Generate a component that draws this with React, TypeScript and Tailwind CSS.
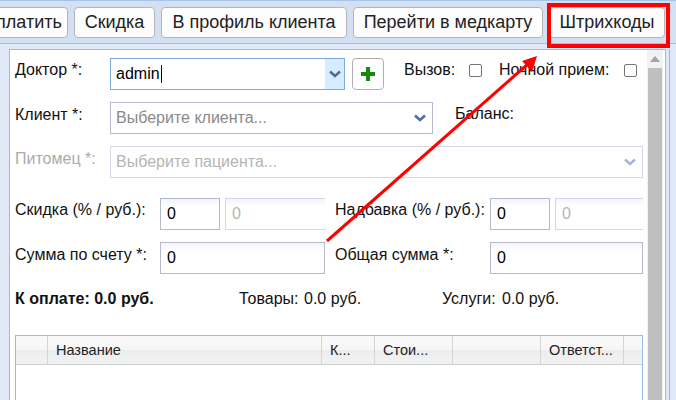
import React from "react";

const font = { fontFamily: '"Liberation Sans", Arial, sans-serif' };

function Btn({ children, className = "" }: { children: React.ReactNode; className?: string }) {
  return (
    <div className={"h-[31px] shrink-0 rounded-[4px] border border-[#b5b5b5] bg-[#fdfdfd] flex items-center justify-center text-[18px] text-[#222] whitespace-nowrap " + className}>
      {children}
    </div>
  );
}

function Chevron({ color }: { color: string }) {
  return (
    <svg width="12" height="8" viewBox="0 0 12 8">
      <path d="M1 1.5 L6 6 L11 1.5" fill="none" stroke={color} strokeWidth="2.6" />
    </svg>
  );
}

function Input({ className = "", value, disabled }: { className?: string; value: string; disabled?: boolean }) {
  return (
    <div
      className={
        "h-[32px] shrink-0 border bg-gradient-to-b from-[#f3f4f7] to-white to-[25%] pl-[6px] flex items-center text-[16px] " +
        (disabled ? "border-[#d4d6e3] text-[#b5b5b5] " : "border-[#b5b8ce] text-black ") +
        className
      }
    >
      {value}
    </div>
  );
}

function Check() {
  return <div className="h-[13px] w-[13px] shrink-0 rounded-[2px] border border-[#767676] bg-white" />;
}

const cols = [
  { w: "w-[32px]", t: "" },
  { w: "w-[274px]", t: "Название" },
  { w: "w-[53px]", t: "К..." },
  { w: "w-[78px]", t: "Стои..." },
  { w: "w-[88px]", t: "" },
  { w: "w-[83px]", t: "Ответст..." },
];

export default function App() {
  return (
    <div style={font} className="relative h-[400px] w-[676px] overflow-hidden bg-[#dfe8f6] text-[16px] text-[#111]">
      {/* toolbar */}
      <div className="h-[44px] border-t border-b border-t-[#a9c3e6] border-b-[#a3bfe4] bg-[#d2e0f1] pt-[6px] flex gap-[6px] -ml-[24px]">
        <Btn className="w-[92px]">Оплатить</Btn>
        <Btn className="w-[81px]">Скидка</Btn>
        <Btn className="w-[186px]">В профиль клиента</Btn>
        <Btn className="w-[190px]">Перейти в медкарту</Btn>
        <Btn className="w-[116px]">Штрихкоды</Btn>
      </div>

      {/* body */}
      <div className="flex h-[356px] pt-[5px] pl-[9px]">
        <div className="flex h-[400px] w-[657px] border border-[#99bbe8] bg-white">
          <div className="w-[634px] shrink-0 pl-[5px] pt-[8px]">
            {/* doctor */}
            <div className="flex h-[32px]">
              <div className="w-[95px] shrink-0">Доктор *:</div>
              <div className="h-[32px] w-[235px] shrink-0 border border-[#7eaadc] flex">
                <div className="flex-1 pl-[5px] flex items-center text-[16px] text-black">
                  admin<span className="ml-px inline-block h-[18px] w-px bg-black" />
                </div>
                <div className="w-[19px] bg-[#d6edff] flex items-center justify-center">
                  <Chevron color="#4a6fa5" />
                </div>
              </div>
              <div className="ml-[7px] h-[32px] w-[32px] shrink-0 rounded-[4px] border border-[#b0b0b0] bg-white flex items-center justify-center">
                <svg width="14" height="14" viewBox="0 0 14 14">
                  <path d="M5 0h4v5h5v4H9v5H5V9H0V5h5z" fill="#16890f" />
                </svg>
              </div>
              <div className="ml-[20px] w-[65px] shrink-0">Вызов:</div>
              <div className="pt-[6px] shrink-0"><Check /></div>
              <div className="ml-[17px] w-[125px] shrink-0">Ночной прием:</div>
              <div className="pt-[6px] shrink-0"><Check /></div>
            </div>
            {/* client */}
            <div className="mt-[12px] flex h-[32px]">
              <div className="w-[95px] pt-px shrink-0">Клиент *:</div>
              <div className="h-[32px] w-[323px] shrink-0 border border-[#b5b8ce] flex items-center justify-between pl-[5px] pr-[6px] text-[16px] text-[#8a8a8a]">
                Выберите клиента...
                <Chevron color="#4a6fa5" />
              </div>
              <div className="ml-[22px]">Баланс:</div>
            </div>
            {/* pet */}
            <div className="mt-[12px] flex h-[32px]">
              <div className="w-[95px] pt-px shrink-0 text-[#ababab]">Питомец *:</div>
              <div className="h-[32px] w-[533px] shrink-0 border border-[#d4d6e3] flex items-center justify-between pl-[5px] pr-[6px] text-[16px] text-[#b5b5b5]">
                Выберите пациента...
                <Chevron color="#a5b7d2" />
              </div>
            </div>
            {/* discount */}
            <div className="mt-[20px] flex h-[32px]">
              <div className="w-[145px] shrink-0 whitespace-nowrap">Скидка (% / руб.):</div>
              <Input className="w-[60px]" value="0" />
              <Input className="ml-[5px] w-[100px] border-r-0" value="0" disabled />
              <div className="ml-[10px] w-[155px] shrink-0 whitespace-nowrap">Надбавка (% / руб.):</div>
              <Input className="w-[60px]" value="0" />
              <Input className="ml-[5px] w-[88px] border-r-0" value="0" disabled />
            </div>
            {/* sum */}
            <div className="mt-[12px] flex h-[32px]">
              <div className="w-[145px] pt-px shrink-0 whitespace-nowrap">Сумма по счету *:</div>
              <Input className="w-[165px]" value="0" />
              <div className="ml-[10px] w-[155px] shrink-0 pt-px">Общая сумма *:</div>
              <Input className="w-[153px]" value="0" />
            </div>
            {/* totals */}
            <div className="mt-[16px] flex h-[18px] items-center">
              <b className="w-[224px] shrink-0 font-bold">К оплате: 0.0 руб.</b>
              <span className="w-[65px] shrink-0">Товары:</span>
              <span className="w-[138px] shrink-0">0.0 руб.</span>
              <span className="w-[60px] shrink-0">Услуги:</span>
              <span>0.0 руб.</span>
            </div>
            {/* grid */}
            <div className="mt-[27px] h-[100px] w-[628px] border border-[#99bbe8]">
              <div className="flex h-[29px] border-b border-[#cfcfcf] bg-[linear-gradient(#f9f9f9_0%,#f6f6f6_50%,#ededed_50%,#f0f1f2_100%)] text-[14.5px] text-[#222]">
                {cols.map((c, i) => (
                  <div key={i} className={c.w + " shrink-0 border-r border-[#d4d4d4] pl-[8px] pt-[2px] flex items-center whitespace-nowrap"}>
                    {c.t}
                  </div>
                ))}
              </div>
            </div>
          </div>
          {/* scrollbar */}
          <div className="ml-[3px] w-[16px] shrink-0 bg-[#f1f1f1] flex flex-col items-center">
            <div className="mt-[6px] h-0 w-0 border-x-[5px] border-b-[6px] border-x-transparent border-b-[#a3a3a3]" />
            <div className="mt-[6px] h-full w-[14px] bg-[#bfbfbf]" />
          </div>
        </div>
        <div className="ml-[3px] h-full w-[1px] bg-[#99bbe8]" />
      </div>

      {/* red annotation */}
      <div className="absolute left-[547px] top-[3px] h-[45px] w-[123px] border-[4px] border-[#ff0000]" />
      <svg className="absolute left-0 top-0" width="676" height="400">
        <line x1="327" y1="241" x2="528" y2="64" stroke="#ff0000" strokeWidth="3" />
        <polygon points="537,56 522,61 532,72" fill="#ff0000" />
      </svg>
    </div>
  );
}
